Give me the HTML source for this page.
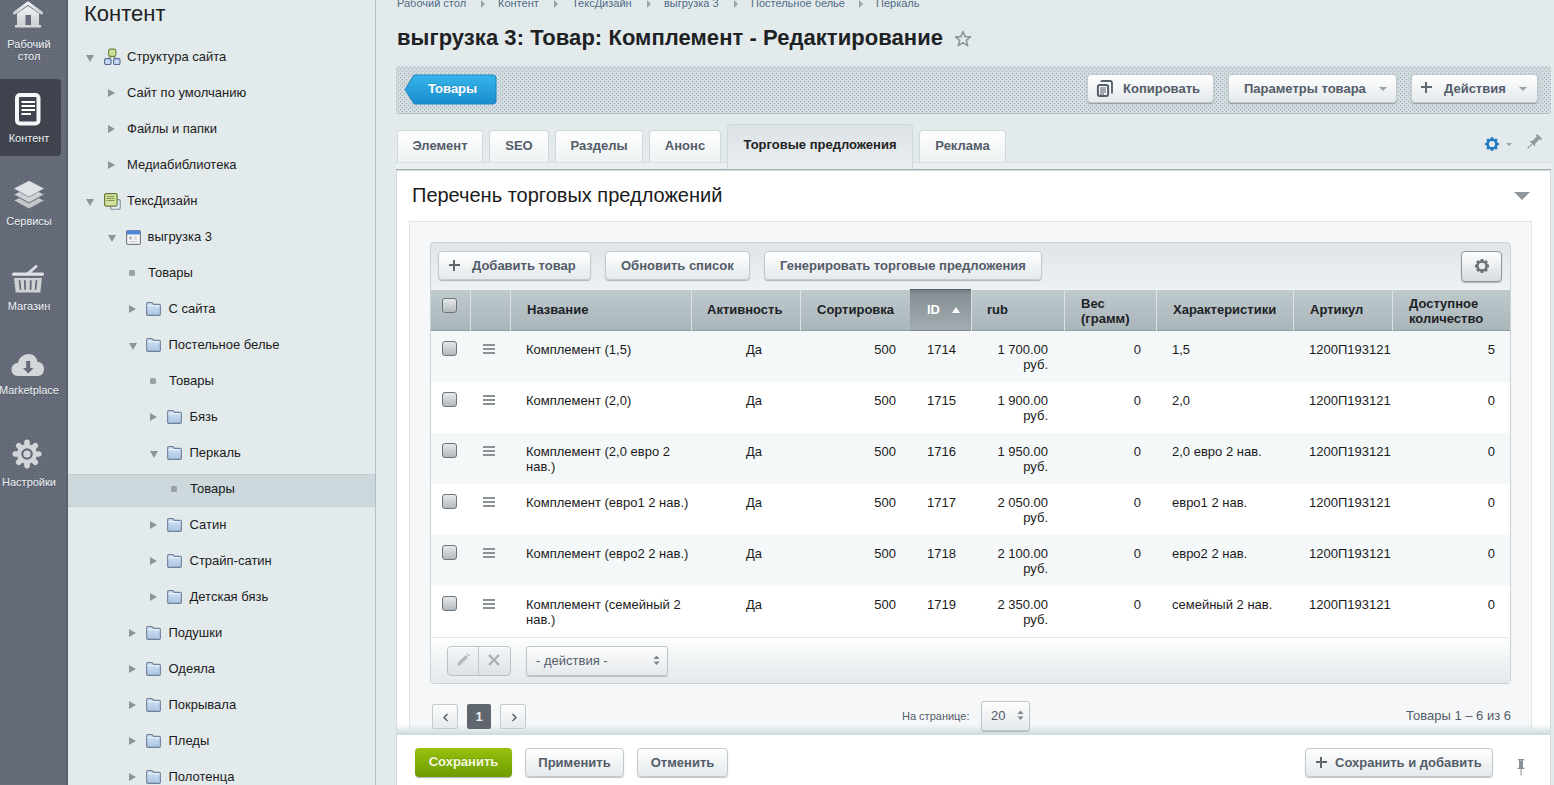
<!DOCTYPE html>
<html><head><meta charset="utf-8"><style>
*{box-sizing:border-box;margin:0;padding:0}
html,body{width:1554px;height:785px;overflow:hidden}
body{font-family:"Liberation Sans",sans-serif;background:#e3eaec;position:relative;color:#000}
.a{position:absolute}
#side{left:0;top:0;width:68px;height:785px;background-color:#656b79}
#side .sh{right:0;top:0;width:2px;height:785px;background:#5a606c}
#side .act{left:0;top:79px;width:61px;height:77px;background:#3e434d;border-radius:0 4px 4px 0}
#side .lbl{color:#eef2f4;font-size:11px;width:100px;text-align:center;line-height:12px;left:-21px;white-space:nowrap;text-shadow:0 1px 0 rgba(0,0,0,.25)}
#tree{left:68px;top:0;width:307px;height:785px;background:#e3eaec}
#treeb{left:375px;top:0;width:1px;height:785px;background:#afbdca}
.tt{font-size:13px;color:#1b1b1b;white-space:nowrap;line-height:16px}
.tri-r{width:0;height:0;border-left:7px solid #8e949b;border-top:4.5px solid transparent;border-bottom:4.5px solid transparent}
.tri-d{width:0;height:0;border-top:7px solid #8e949b;border-left:4.5px solid transparent;border-right:4.5px solid transparent}
.bul{width:6px;height:6px;background:#9aa1a7;border-radius:1.5px}
.sel{left:68px;top:474px;width:307px;height:33px;background:#ccd8dc;border-top:1px solid #c2cdd2;border-bottom:1px solid #c4cfd3}
.bc{font-size:11px;color:#4f6a85;white-space:nowrap;line-height:12px;top:-3px}
.bca{top:0px;width:0;height:0;border-left:4px solid #9aa3aa;border-top:4px solid transparent;border-bottom:4px solid transparent}
#title{left:397px;top:25px;font-size:22px;font-weight:bold;letter-spacing:0.055px;color:#1e2225;white-space:nowrap;line-height:26px}
#tb{left:396px;top:66px;width:1155px;height:47px;border-radius:3px;overflow:hidden;box-shadow:0 1px 0 #b3bcc1}
.btn{height:29px;border-radius:4px;background:linear-gradient(#ffffff,#e4e9eb);border:1px solid #c3cacd;
 box-shadow:0 1px 1px rgba(0,0,0,.25);font-size:13px;font-weight:bold;color:#535c69;white-space:nowrap;line-height:27px}
.tab{top:130px;height:32px;border:1px solid #d1d8db;border-bottom:none;border-radius:4px 4px 0 0;
 background:linear-gradient(#ffffff,#edf1f2);font-size:13px;font-weight:bold;color:#535c69;text-align:center;line-height:30px;white-space:nowrap}
.plus{width:11px;height:11px;background:linear-gradient(#5f676f,#5f676f) center/2.4px 11px no-repeat,linear-gradient(#5f676f,#5f676f) center/11px 2.4px no-repeat}
.hdr{background:linear-gradient(#bfcace,#a9b6ba);border-bottom:1px solid #8f9b9e}
.hsep{width:1px;height:41px;background:#e2e7e9;opacity:.85}
.cb{width:15px;height:15px;border:1px solid #6d7479;border-radius:3px;background:linear-gradient(#e6e9eb,#b3b9bd)}
.ht{font-size:13px;font-weight:bold;line-height:15px;white-space:nowrap}
.td{font-size:13px;line-height:15px;white-space:nowrap;color:#1b1b1b}
.r{text-align:right}
.drag{width:12px;height:10px;background:linear-gradient(#899396 0 2px,transparent 2px 4px,#899396 4px 6px,transparent 6px 8px,#899396 8px 10px)}
.sel2{border:1px solid #c0c7cb;border-radius:3px;background:linear-gradient(#fdfdfd,#e5e9eb);box-shadow:0 1px 1px rgba(0,0,0,.2)}
.updn{width:7px;height:11px;background:linear-gradient(135deg,transparent 50%,#7c858b 50%) 0 0/3.5px 4px no-repeat,linear-gradient(225deg,transparent 50%,#7c858b 50%) 3.5px 0/3.5px 4px no-repeat,linear-gradient(45deg,transparent 50%,#7c858b 50%) 0 7px/3.5px 4px no-repeat,linear-gradient(315deg,transparent 50%,#7c858b 50%) 3.5px 7px/3.5px 4px no-repeat}
.pg{width:26px;height:25px;border:1px solid #c3cacd;border-radius:2px;background:linear-gradient(#fdfdfd,#e5e9eb)}

</style></head><body>
<div id="side" class="a"><svg class="a" style="left:0;top:0" width="68" height="785"><defs><pattern id="sdp" width="4" height="3" patternUnits="userSpaceOnUse"><rect x="2" y="0" width="1" height="1" fill="#585e6c"/><rect x="0" y="2" width="1" height="1" fill="#585e6c"/></pattern></defs><rect width="68" height="785" fill="#676d7b"/><rect width="68" height="785" fill="url(#sdp)"/></svg><div class="a sh"></div><div class="a act"></div>
<svg class="a" style="left:12px;top:1px" width="32" height="28" viewBox="0 0 32 28">
<defs><linearGradient id="gw" x1="0" y1="0" x2="0" y2="1"><stop offset="0" stop-color="#f2f4f5"/><stop offset="1" stop-color="#c9cdd1"/></linearGradient></defs>
<path d="M2.5 12 L16 2 L29.5 12" fill="none" stroke="url(#gw)" stroke-width="3" stroke-linecap="round" stroke-linejoin="round"/>
<path d="M5 12.5 L16 5 L27 12.5 V25 H5 Z" fill="url(#gw)"/>
<rect x="3" y="24" width="26" height="2.5" fill="#d4d8db"/>
<rect x="13.5" y="14" width="5.5" height="10" fill="#656b79"/>
</svg>
<div class="a lbl" style="top:38px">Рабочий<br>стол</div>
<svg class="a" style="left:15px;top:93px" width="26" height="33" viewBox="0 0 26 33">
<rect x="2" y="2" width="21.5" height="28.5" rx="3" fill="#3e434d" stroke="#f4f6f7" stroke-width="4"/>
<rect x="6.5" y="8" width="13.5" height="2" fill="#fff"/><rect x="6.5" y="12" width="13.5" height="2" fill="#fff"/>
<rect x="6.5" y="16" width="13.5" height="2" fill="#fff"/><rect x="6.5" y="20" width="9.5" height="2" fill="#fff"/>
</svg>
<div class="a lbl" style="top:132px">Контент</div>
<svg class="a" style="left:12px;top:179px" width="34" height="32" viewBox="0 0 34 32">
<path d="M1.5 21.5 L17 13.5 L32.5 21.5 L17 30 Z" fill="#c3c7ca" stroke="#656b79" stroke-width="1"/>
<path d="M1.5 15.5 L17 7.5 L32.5 15.5 L17 24 Z" fill="#ccd0d3" stroke="#656b79" stroke-width="1"/>
<path d="M1.5 9.5 L17 1.5 L32.5 9.5 L17 18 Z" fill="#dfe3e5" stroke="#656b79" stroke-width="0.6"/>
</svg>
<div class="a lbl" style="top:215px">Сервисы</div>
<svg class="a" style="left:11px;top:264px" width="34" height="30" viewBox="0 0 34 30">
<path d="M16.5 10 L25 2.5" stroke="#d9dde0" stroke-width="3" stroke-linecap="round"/>
<rect x="1" y="8.5" width="32" height="3.3" rx="1.6" fill="#dde1e3"/>
<path d="M3 14 H31 L29.3 28.5 H4.7 Z" fill="#cdd1d4"/>
<path d="M8.6 17 L9.4 25" stroke="#656b79" stroke-width="1.8" stroke-linecap="round"/>
<path d="M13.8 17 L14.1 25" stroke="#656b79" stroke-width="1.8" stroke-linecap="round"/>
<path d="M19.8 17 L19.6 25" stroke="#656b79" stroke-width="1.8" stroke-linecap="round"/>
<path d="M25.4 17 L24.6 25" stroke="#656b79" stroke-width="1.8" stroke-linecap="round"/>
</svg>
<div class="a lbl" style="top:300px">Магазин</div>
<svg class="a" style="left:11px;top:353px" width="34" height="24" viewBox="0 0 34 24">
<path d="M7 23 C2.5 23 0.5 20 0.5 16.5 C0.5 12.5 3.5 10 7 10 C8 4.5 12.5 1 17.5 1 C22.5 1 26 4.5 26.5 9 C30 9 33 11.5 33 16 C33 20.5 30 23 26.5 23 Z" fill="#d3d7da"/>
<path d="M15.2 8 H19.2 V15 H22.5 L17.2 20.5 L11.9 15 H15.2 Z" fill="#656b79"/>
</svg>
<div class="a lbl" style="top:384px">Marketplace</div>
<svg class="a" style="left:12px;top:439px" width="30" height="30" viewBox="0 0 30 30">
<g fill="#d3d7da" transform="translate(15,15)">
<circle r="10"/>
<rect x="-2.8" y="-14.5" width="5.6" height="7" rx="2.8" transform="rotate(0)"/><rect x="-2.8" y="-14.5" width="5.6" height="7" rx="2.8" transform="rotate(45)"/><rect x="-2.8" y="-14.5" width="5.6" height="7" rx="2.8" transform="rotate(90)"/><rect x="-2.8" y="-14.5" width="5.6" height="7" rx="2.8" transform="rotate(135)"/><rect x="-2.8" y="-14.5" width="5.6" height="7" rx="2.8" transform="rotate(180)"/><rect x="-2.8" y="-14.5" width="5.6" height="7" rx="2.8" transform="rotate(225)"/><rect x="-2.8" y="-14.5" width="5.6" height="7" rx="2.8" transform="rotate(270)"/><rect x="-2.8" y="-14.5" width="5.6" height="7" rx="2.8" transform="rotate(315)"/>
<circle r="5.8" fill="#656b79"/><circle r="3.6" fill="#d3d7da"/>
</g></svg>
<div class="a lbl" style="top:476px">Настройки</div>
</div>
<div id="tree" class="a"></div><div class="a sel"></div><div id="treeb" class="a"></div>
<div class="a" style="left:84px;top:1px;font-size:22px;color:#1e2225;white-space:nowrap;line-height:26px">Контент</div>
<div class="a tri-d" style="left:86px;top:55px"></div>
<svg class="a" style="left:104px;top:48px" width="17" height="17" viewBox="0 0 17 17">
<path d="M8.2 8.5 L3.8 10.5 M8.2 8.5 L12.8 10.5" stroke="#7d8f9a" stroke-width="0.9"/>
<rect x="4.6" y="1.1" width="7.3" height="7.3" rx="1.6" fill="#cde09a" stroke="#72833f" stroke-width="1.1"/>
<rect x="0.6" y="10.6" width="6.4" height="6" rx="1.5" fill="#c4d9f5" stroke="#586b8e" stroke-width="1.1"/>
<rect x="9.6" y="10.6" width="6.4" height="6" rx="1.5" fill="#c4d9f5" stroke="#586b8e" stroke-width="1.1"/>
</svg>
<div class="a tt" style="left:127px;top:49px">Структура сайта</div>
<div class="a tri-r" style="left:108px;top:89px"></div>
<div class="a tt" style="left:127px;top:85px">Сайт по умолчанию</div>
<div class="a tri-r" style="left:108px;top:125px"></div>
<div class="a tt" style="left:127px;top:121px">Файлы и папки</div>
<div class="a tri-r" style="left:108px;top:161px"></div>
<div class="a tt" style="left:127px;top:157px">Медиабиблиотека</div>
<div class="a tri-d" style="left:86px;top:199px"></div>
<svg class="a" style="left:104px;top:193px" width="17" height="17" viewBox="0 0 17 17">
<rect x="6.6" y="6.6" width="9.6" height="9.6" rx="1.3" fill="#e4f2fa" stroke="#7f8c99" stroke-width="1.1"/>
<rect x="0.6" y="0.6" width="12.5" height="12.5" rx="1.5" fill="#d3e4a0" stroke="#6a7b3a" stroke-width="1.2"/>
<path d="M2.5 3.5 H10.5 M2.5 5.5 H10.5 M2.5 7.5 H10.5" stroke="#7b8f45" stroke-width="0.9"/>
</svg>
<div class="a tt" style="left:127px;top:193px">ТексДизайн</div>
<div class="a tri-d" style="left:108px;top:235px"></div>
<svg class="a" style="left:126px;top:230px" width="15" height="15" viewBox="0 0 15 15">
<rect x="0.6" y="0.6" width="13.8" height="13.8" rx="1.5" fill="#fafafa" stroke="#7c7f82" stroke-width="1.2"/>
<rect x="0.6" y="0.6" width="13.8" height="4" rx="1.3" fill="#4f86d8"/>
<rect x="3" y="6.5" width="3" height="3" fill="#b4b8bb"/><path d="M7.5 7 H11.5 M7.5 9 H11.5 M3 11.5 H11.5" stroke="#c2c5c8" stroke-width="1"/>
</svg>
<div class="a tt" style="left:147.5px;top:229px">выгрузка 3</div>
<div class="a bul" style="left:129px;top:270px"></div>
<div class="a tt" style="left:148px;top:265px">Товары</div>
<div class="a tri-r" style="left:129px;top:305px"></div>
<svg class="a" style="left:146px;top:302px" width="15" height="14" viewBox="0 0 16 15" preserveAspectRatio="none">
<defs><linearGradient id="fg146302" x1="0" y1="0" x2="0" y2="1"><stop offset="0" stop-color="#d6e6f6"/><stop offset="1" stop-color="#a9c3e2"/></linearGradient></defs>
<path d="M0.7 13 V2 Q0.7 0.7 2 0.7 H6.5 L8 2.5 H14 Q15.3 2.5 15.3 3.8 V13 Q15.3 14.3 14 14.3 H2 Q0.7 14.3 0.7 13 Z" fill="url(#fg146302)" stroke="#6d7f9a" stroke-width="1.2"/>
<path d="M1.5 4 H14.5" stroke="#eef6ff" stroke-width="1"/>
</svg>
<div class="a tt" style="left:168.5px;top:301px">С сайта</div>
<div class="a tri-d" style="left:129px;top:343px"></div>
<svg class="a" style="left:146px;top:338px" width="15" height="14" viewBox="0 0 16 15" preserveAspectRatio="none">
<defs><linearGradient id="fg146338" x1="0" y1="0" x2="0" y2="1"><stop offset="0" stop-color="#d6e6f6"/><stop offset="1" stop-color="#a9c3e2"/></linearGradient></defs>
<path d="M0.7 13 V2 Q0.7 0.7 2 0.7 H6.5 L8 2.5 H14 Q15.3 2.5 15.3 3.8 V13 Q15.3 14.3 14 14.3 H2 Q0.7 14.3 0.7 13 Z" fill="url(#fg146338)" stroke="#6d7f9a" stroke-width="1.2"/>
<path d="M1.5 4 H14.5" stroke="#eef6ff" stroke-width="1"/>
</svg>
<div class="a tt" style="left:168.5px;top:337px">Постельное белье</div>
<div class="a bul" style="left:150px;top:378px"></div>
<div class="a tt" style="left:169px;top:373px">Товары</div>
<div class="a tri-r" style="left:150px;top:413px"></div>
<svg class="a" style="left:167px;top:410px" width="15" height="14" viewBox="0 0 16 15" preserveAspectRatio="none">
<defs><linearGradient id="fg167410" x1="0" y1="0" x2="0" y2="1"><stop offset="0" stop-color="#d6e6f6"/><stop offset="1" stop-color="#a9c3e2"/></linearGradient></defs>
<path d="M0.7 13 V2 Q0.7 0.7 2 0.7 H6.5 L8 2.5 H14 Q15.3 2.5 15.3 3.8 V13 Q15.3 14.3 14 14.3 H2 Q0.7 14.3 0.7 13 Z" fill="url(#fg167410)" stroke="#6d7f9a" stroke-width="1.2"/>
<path d="M1.5 4 H14.5" stroke="#eef6ff" stroke-width="1"/>
</svg>
<div class="a tt" style="left:189.5px;top:409px">Бязь</div>
<div class="a tri-d" style="left:150px;top:451px"></div>
<svg class="a" style="left:167px;top:446px" width="15" height="14" viewBox="0 0 16 15" preserveAspectRatio="none">
<defs><linearGradient id="fg167446" x1="0" y1="0" x2="0" y2="1"><stop offset="0" stop-color="#d6e6f6"/><stop offset="1" stop-color="#a9c3e2"/></linearGradient></defs>
<path d="M0.7 13 V2 Q0.7 0.7 2 0.7 H6.5 L8 2.5 H14 Q15.3 2.5 15.3 3.8 V13 Q15.3 14.3 14 14.3 H2 Q0.7 14.3 0.7 13 Z" fill="url(#fg167446)" stroke="#6d7f9a" stroke-width="1.2"/>
<path d="M1.5 4 H14.5" stroke="#eef6ff" stroke-width="1"/>
</svg>
<div class="a tt" style="left:189.5px;top:445px">Перкаль</div>
<div class="a bul" style="left:171px;top:486px"></div>
<div class="a tt" style="left:190px;top:481px">Товары</div>
<div class="a tri-r" style="left:150px;top:521px"></div>
<svg class="a" style="left:167px;top:518px" width="15" height="14" viewBox="0 0 16 15" preserveAspectRatio="none">
<defs><linearGradient id="fg167518" x1="0" y1="0" x2="0" y2="1"><stop offset="0" stop-color="#d6e6f6"/><stop offset="1" stop-color="#a9c3e2"/></linearGradient></defs>
<path d="M0.7 13 V2 Q0.7 0.7 2 0.7 H6.5 L8 2.5 H14 Q15.3 2.5 15.3 3.8 V13 Q15.3 14.3 14 14.3 H2 Q0.7 14.3 0.7 13 Z" fill="url(#fg167518)" stroke="#6d7f9a" stroke-width="1.2"/>
<path d="M1.5 4 H14.5" stroke="#eef6ff" stroke-width="1"/>
</svg>
<div class="a tt" style="left:189.5px;top:517px">Сатин</div>
<div class="a tri-r" style="left:150px;top:557px"></div>
<svg class="a" style="left:167px;top:554px" width="15" height="14" viewBox="0 0 16 15" preserveAspectRatio="none">
<defs><linearGradient id="fg167554" x1="0" y1="0" x2="0" y2="1"><stop offset="0" stop-color="#d6e6f6"/><stop offset="1" stop-color="#a9c3e2"/></linearGradient></defs>
<path d="M0.7 13 V2 Q0.7 0.7 2 0.7 H6.5 L8 2.5 H14 Q15.3 2.5 15.3 3.8 V13 Q15.3 14.3 14 14.3 H2 Q0.7 14.3 0.7 13 Z" fill="url(#fg167554)" stroke="#6d7f9a" stroke-width="1.2"/>
<path d="M1.5 4 H14.5" stroke="#eef6ff" stroke-width="1"/>
</svg>
<div class="a tt" style="left:189.5px;top:553px">Страйп-сатин</div>
<div class="a tri-r" style="left:150px;top:593px"></div>
<svg class="a" style="left:167px;top:590px" width="15" height="14" viewBox="0 0 16 15" preserveAspectRatio="none">
<defs><linearGradient id="fg167590" x1="0" y1="0" x2="0" y2="1"><stop offset="0" stop-color="#d6e6f6"/><stop offset="1" stop-color="#a9c3e2"/></linearGradient></defs>
<path d="M0.7 13 V2 Q0.7 0.7 2 0.7 H6.5 L8 2.5 H14 Q15.3 2.5 15.3 3.8 V13 Q15.3 14.3 14 14.3 H2 Q0.7 14.3 0.7 13 Z" fill="url(#fg167590)" stroke="#6d7f9a" stroke-width="1.2"/>
<path d="M1.5 4 H14.5" stroke="#eef6ff" stroke-width="1"/>
</svg>
<div class="a tt" style="left:189.5px;top:589px">Детская бязь</div>
<div class="a tri-r" style="left:129px;top:629px"></div>
<svg class="a" style="left:146px;top:626px" width="15" height="14" viewBox="0 0 16 15" preserveAspectRatio="none">
<defs><linearGradient id="fg146626" x1="0" y1="0" x2="0" y2="1"><stop offset="0" stop-color="#d6e6f6"/><stop offset="1" stop-color="#a9c3e2"/></linearGradient></defs>
<path d="M0.7 13 V2 Q0.7 0.7 2 0.7 H6.5 L8 2.5 H14 Q15.3 2.5 15.3 3.8 V13 Q15.3 14.3 14 14.3 H2 Q0.7 14.3 0.7 13 Z" fill="url(#fg146626)" stroke="#6d7f9a" stroke-width="1.2"/>
<path d="M1.5 4 H14.5" stroke="#eef6ff" stroke-width="1"/>
</svg>
<div class="a tt" style="left:168.5px;top:625px">Подушки</div>
<div class="a tri-r" style="left:129px;top:665px"></div>
<svg class="a" style="left:146px;top:662px" width="15" height="14" viewBox="0 0 16 15" preserveAspectRatio="none">
<defs><linearGradient id="fg146662" x1="0" y1="0" x2="0" y2="1"><stop offset="0" stop-color="#d6e6f6"/><stop offset="1" stop-color="#a9c3e2"/></linearGradient></defs>
<path d="M0.7 13 V2 Q0.7 0.7 2 0.7 H6.5 L8 2.5 H14 Q15.3 2.5 15.3 3.8 V13 Q15.3 14.3 14 14.3 H2 Q0.7 14.3 0.7 13 Z" fill="url(#fg146662)" stroke="#6d7f9a" stroke-width="1.2"/>
<path d="M1.5 4 H14.5" stroke="#eef6ff" stroke-width="1"/>
</svg>
<div class="a tt" style="left:168.5px;top:661px">Одеяла</div>
<div class="a tri-r" style="left:129px;top:701px"></div>
<svg class="a" style="left:146px;top:698px" width="15" height="14" viewBox="0 0 16 15" preserveAspectRatio="none">
<defs><linearGradient id="fg146698" x1="0" y1="0" x2="0" y2="1"><stop offset="0" stop-color="#d6e6f6"/><stop offset="1" stop-color="#a9c3e2"/></linearGradient></defs>
<path d="M0.7 13 V2 Q0.7 0.7 2 0.7 H6.5 L8 2.5 H14 Q15.3 2.5 15.3 3.8 V13 Q15.3 14.3 14 14.3 H2 Q0.7 14.3 0.7 13 Z" fill="url(#fg146698)" stroke="#6d7f9a" stroke-width="1.2"/>
<path d="M1.5 4 H14.5" stroke="#eef6ff" stroke-width="1"/>
</svg>
<div class="a tt" style="left:168.5px;top:697px">Покрывала</div>
<div class="a tri-r" style="left:129px;top:737px"></div>
<svg class="a" style="left:146px;top:734px" width="15" height="14" viewBox="0 0 16 15" preserveAspectRatio="none">
<defs><linearGradient id="fg146734" x1="0" y1="0" x2="0" y2="1"><stop offset="0" stop-color="#d6e6f6"/><stop offset="1" stop-color="#a9c3e2"/></linearGradient></defs>
<path d="M0.7 13 V2 Q0.7 0.7 2 0.7 H6.5 L8 2.5 H14 Q15.3 2.5 15.3 3.8 V13 Q15.3 14.3 14 14.3 H2 Q0.7 14.3 0.7 13 Z" fill="url(#fg146734)" stroke="#6d7f9a" stroke-width="1.2"/>
<path d="M1.5 4 H14.5" stroke="#eef6ff" stroke-width="1"/>
</svg>
<div class="a tt" style="left:168.5px;top:733px">Пледы</div>
<div class="a tri-r" style="left:129px;top:773px"></div>
<svg class="a" style="left:146px;top:770px" width="15" height="14" viewBox="0 0 16 15" preserveAspectRatio="none">
<defs><linearGradient id="fg146770" x1="0" y1="0" x2="0" y2="1"><stop offset="0" stop-color="#d6e6f6"/><stop offset="1" stop-color="#a9c3e2"/></linearGradient></defs>
<path d="M0.7 13 V2 Q0.7 0.7 2 0.7 H6.5 L8 2.5 H14 Q15.3 2.5 15.3 3.8 V13 Q15.3 14.3 14 14.3 H2 Q0.7 14.3 0.7 13 Z" fill="url(#fg146770)" stroke="#6d7f9a" stroke-width="1.2"/>
<path d="M1.5 4 H14.5" stroke="#eef6ff" stroke-width="1"/>
</svg>
<div class="a tt" style="left:168.5px;top:769px">Полотенца</div>
<!-- breadcrumbs -->
<div class="a bc" style="left:397px">Рабочий стол</div><div class="a bca" style="left:481px"></div>
<div class="a bc" style="left:498px">Контент</div><div class="a bca" style="left:554px"></div>
<div class="a bc" style="left:572px">ТексДизайн</div><div class="a bca" style="left:647px"></div>
<div class="a bc" style="left:664px">выгрузка 3</div><div class="a bca" style="left:734px"></div>
<div class="a bc" style="left:751px">Постельное белье</div><div class="a bca" style="left:859px"></div>
<div class="a bc" style="left:876px">Перкаль</div>
<div id="title" class="a">выгрузка 3: Товар: Комплемент - Редактирование</div>
<svg class="a" style="left:954px;top:30px" width="18" height="18" viewBox="0 0 18 18"><path d="M9 1.5 L11.1 6.6 L16.5 6.9 L12.3 10.3 L13.7 15.6 L9 12.6 L4.3 15.6 L5.7 10.3 L1.5 6.9 L6.9 6.6 Z" fill="none" stroke="#8f979d" stroke-width="1.6" stroke-linejoin="round"/></svg>
<!-- toolbar -->
<div id="tb" class="a"><svg width="1155" height="47"><defs><pattern id="tdp" width="4" height="4" patternUnits="userSpaceOnUse"><rect x="2" y="1" width="1" height="1" fill="#a3aeb5"/><rect x="0" y="3" width="1" height="1" fill="#a3aeb5"/></pattern></defs><rect width="1155" height="47" fill="#d0dadf"/><rect width="1155" height="47" fill="url(#tdp)"/></svg></div>
<svg class="a" style="left:404px;top:74px" width="94" height="31" viewBox="0 0 94 31">
<defs><linearGradient id="bl" x1="0" y1="0" x2="0" y2="1"><stop offset="0" stop-color="#36b5ea"/><stop offset="1" stop-color="#1a8ccd"/></linearGradient></defs>
<path d="M10 1 H89 Q92 1 92 4 V27 Q92 30 89 30 H10 L1 15.5 Z" fill="url(#bl)" stroke="#1c86c2" stroke-width="1"/>
</svg>
<div class="a" style="left:428px;top:81px;font-size:13px;font-weight:bold;color:#fff;line-height:16px;text-shadow:0 -1px 0 rgba(0,0,0,.15)">Товары</div>
<div class="a btn" style="left:1087px;top:74px;width:127px"><span class="a" style="left:35px">Копировать</span></div>
<svg class="a" style="left:1096px;top:80px" width="18" height="18" viewBox="0 0 18 18"><path d="M5 2 Q5 1 6.5 1 H14 Q16 1 16 3 V13.5" fill="none" stroke="#535c69" stroke-width="1.8"/><rect x="1.9" y="4.9" width="10.2" height="11.2" rx="2" fill="#f4f6f7" stroke="#535c69" stroke-width="2"/><path d="M4 8 H10 M4 10 H10 M4 12 H10 M4 14 H8" stroke="#535c69" stroke-width="1.1"/></svg>
<div class="a btn" style="left:1228px;top:74px;width:169px"><span class="a" style="left:15px">Параметры товара</span></div>
<div class="a" style="left:1379px;top:87px;width:0;height:0;border-top:4px solid #9aa1a7;border-left:4px solid transparent;border-right:4px solid transparent"></div>
<div class="a btn" style="left:1411px;top:74px;width:127px"><span class="a" style="left:32px">Действия</span></div>
<div class="a" style="left:1421px;top:82px;width:11px;height:11px;background:linear-gradient(#5f676f,#5f676f) center/2.4px 11px no-repeat,linear-gradient(#5f676f,#5f676f) center/11px 2.4px no-repeat"></div>
<div class="a" style="left:1519px;top:87px;width:0;height:0;border-top:4px solid #9aa1a7;border-left:4px solid transparent;border-right:4px solid transparent"></div>
<!-- tabs -->
<div class="a tab" style="left:397px;width:86px">Элемент</div>
<div class="a tab" style="left:489px;width:60px">SEO</div>
<div class="a tab" style="left:555px;width:88px">Разделы</div>
<div class="a tab" style="left:649px;width:72px">Анонс</div>
<div class="a tab" style="z-index:2;left:727px;top:124px;height:45px;width:186px;background:linear-gradient(#dde3e6,#e9eef0);color:#222;line-height:40px">Торговые предложения</div>
<div class="a tab" style="left:919px;width:87px">Реклама</div>
<svg class="a" style="left:1484px;top:136px" width="16" height="16" viewBox="0 0 16 16"><g transform="translate(8,8)" fill="#1f7ac4"><circle r="5.6"/><circle cx="0" cy="-5.6" r="1.5" transform="rotate(0)"/><circle cx="0" cy="-5.6" r="1.5" transform="rotate(45)"/><circle cx="0" cy="-5.6" r="1.5" transform="rotate(90)"/><circle cx="0" cy="-5.6" r="1.5" transform="rotate(135)"/><circle cx="0" cy="-5.6" r="1.5" transform="rotate(180)"/><circle cx="0" cy="-5.6" r="1.5" transform="rotate(225)"/><circle cx="0" cy="-5.6" r="1.5" transform="rotate(270)"/><circle cx="0" cy="-5.6" r="1.5" transform="rotate(315)"/><circle r="3.1" fill="#e3eaec"/></g></svg>
<div class="a" style="left:1506px;top:143px;width:0;height:0;border-top:3px solid #9aa1a7;border-left:3px solid transparent;border-right:3px solid transparent"></div>
<svg class="a" style="left:1524px;top:132px" width="20" height="20" viewBox="0 0 20 20"><g transform="rotate(45 10 10) translate(6 2)" fill="#8f979d"><rect x="0.5" y="0" width="7" height="2" rx="0.8"/><path d="M2 2 H6 V8.5 L8 10.5 H0 L2 8.5 Z"/><rect x="3.5" y="10" width="1" height="7"/></g></svg>
<!-- strip below tabs -->
<div class="a" style="left:396px;top:162px;width:1155px;height:7px;background:#e9eef0;border-top:1px solid #d8dfe2"></div>
<div class="a" style="left:396px;top:169px;width:1155px;height:1px;background:#a1abb0"></div><div class="a" style="left:396px;top:170px;width:1155px;height:1px;background:#d3d9dc"></div>
<!-- content panel -->
<div class="a" style="left:396px;top:171px;width:1155px;height:614px;background:#fff;border-left:1px solid #d4dadd;border-right:1px solid #d4dadd"></div>
<div class="a" style="left:412px;top:183px;font-size:20px;color:#1b1b1b;white-space:nowrap;line-height:24px">Перечень торговых предложений</div>
<div class="a" style="left:1514px;top:192px;width:0;height:0;border-top:8px solid #8d969c;border-left:8px solid transparent;border-right:8px solid transparent"></div>
<div class="a" style="left:409px;top:221px;width:1123px;height:564px;background:#f5f7f8;border-top:1px solid #dfe5e8;border-left:1px solid #dfe5e8;border-right:1px solid #dfe5e8"></div>

<div class="a" style="left:430px;top:242px;width:1081px;height:442px;border:1px solid #c9d1d5;border-radius:4px;background:linear-gradient(#dfe5e8,#eef2f3 48px,#fff 48px)"></div>
<div class="a btn" style="left:438px;top:251px;width:153px"><span class="a" style="left:33px">Добавить товар</span></div>
<div class="a plus" style="left:449px;top:260px"></div>
<div class="a btn" style="left:605px;top:251px;width:145px"><span class="a" style="left:15px">Обновить список</span></div>
<div class="a btn" style="left:764px;top:251px;width:278px"><span class="a" style="left:15px">Генерировать торговые предложения</span></div>
<div class="a btn" style="left:1461px;top:251px;width:41px;height:31px;border-color:#8f989d;background:linear-gradient(#fdfdfd,#d7dcdf)"></div>
<svg class="a" style="left:1474px;top:258px" width="16" height="16" viewBox="0 0 16 16"><g transform="translate(8,8)" fill="#6b7378"><circle r="5.5"/><rect x="-1.7" y="-7" width="3.4" height="3.2" rx="1" transform="rotate(0)"/><rect x="-1.7" y="-7" width="3.4" height="3.2" rx="1" transform="rotate(45)"/><rect x="-1.7" y="-7" width="3.4" height="3.2" rx="1" transform="rotate(90)"/><rect x="-1.7" y="-7" width="3.4" height="3.2" rx="1" transform="rotate(135)"/><rect x="-1.7" y="-7" width="3.4" height="3.2" rx="1" transform="rotate(180)"/><rect x="-1.7" y="-7" width="3.4" height="3.2" rx="1" transform="rotate(225)"/><rect x="-1.7" y="-7" width="3.4" height="3.2" rx="1" transform="rotate(270)"/><rect x="-1.7" y="-7" width="3.4" height="3.2" rx="1" transform="rotate(315)"/><circle r="3.3" fill="#e9edef"/></g></svg>
<div class="a hdr" style="left:431px;top:290px;width:1079px;height:41px"></div>
<div class="a" style="left:910px;top:289px;width:61px;height:42px;border-top:1px solid #565e63;border-bottom:1px solid #7f898e;background:linear-gradient(#747e83,#858f94 4px,#a3acb1)"></div>
<div class="a hsep" style="left:470px;top:290px"></div>
<div class="a hsep" style="left:510px;top:290px"></div>
<div class="a hsep" style="left:691px;top:290px"></div>
<div class="a hsep" style="left:800px;top:290px"></div>
<div class="a hsep" style="left:971px;top:290px"></div>
<div class="a hsep" style="left:1064px;top:290px"></div>
<div class="a hsep" style="left:1156px;top:290px"></div>
<div class="a hsep" style="left:1293px;top:290px"></div>
<div class="a hsep" style="left:1392px;top:290px"></div>
<div class="a cb" style="left:442px;top:298px"></div>
<div class="a ht" style="left:527px;top:302px;color:#1e2225">Название</div>
<div class="a ht" style="left:707px;top:302px;color:#1e2225">Активность</div>
<div class="a ht" style="left:817px;top:302px;color:#1e2225">Сортировка</div>
<div class="a ht" style="left:927px;top:302px;color:#fff">ID</div>
<div class="a ht" style="left:987px;top:302px;color:#1e2225">rub</div>
<div class="a ht" style="left:1081px;top:296px;color:#1e2225">Вес<br>(грамм)</div>
<div class="a ht" style="left:1173px;top:302px;color:#1e2225">Характеристики</div>
<div class="a ht" style="left:1310px;top:302px;color:#1e2225">Артикул</div>
<div class="a ht" style="left:1409px;top:296px;color:#1e2225">Доступное<br>количество</div>
<div class="a" style="left:952px;top:307px;width:0;height:0;border-bottom:6px solid #fff;border-left:4.5px solid transparent;border-right:4.5px solid transparent"></div>
<div class="a" style="left:431px;top:331px;width:1079px;height:51px;background:#f5f8f9"></div>
<div class="a cb" style="left:442px;top:341px"></div>
<div class="a drag" style="left:483px;top:344px"></div>
<div class="a td" style="left:526px;top:342px">Комплемент (1,5)</div>
<div class="a td" style="left:746px;top:342px">Да</div>
<div class="a td r" style="left:796px;width:100px;top:342px">500</div>
<div class="a td" style="left:927px;top:342px">1714</div>
<div class="a td r" style="left:948px;width:100px;top:342px">1 700.00<br>руб.</div>
<div class="a td r" style="left:1041px;width:100px;top:342px">0</div>
<div class="a td" style="left:1172px;top:342px">1,5</div>
<div class="a td" style="left:1309px;top:342px">1200П193121</div>
<div class="a td r" style="left:1395px;width:100px;top:342px">5</div>
<div class="a" style="left:431px;top:382px;width:1079px;height:51px;background:#ffffff"></div>
<div class="a cb" style="left:442px;top:392px"></div>
<div class="a drag" style="left:483px;top:395px"></div>
<div class="a td" style="left:526px;top:393px">Комплемент (2,0)</div>
<div class="a td" style="left:746px;top:393px">Да</div>
<div class="a td r" style="left:796px;width:100px;top:393px">500</div>
<div class="a td" style="left:927px;top:393px">1715</div>
<div class="a td r" style="left:948px;width:100px;top:393px">1 900.00<br>руб.</div>
<div class="a td r" style="left:1041px;width:100px;top:393px">0</div>
<div class="a td" style="left:1172px;top:393px">2,0</div>
<div class="a td" style="left:1309px;top:393px">1200П193121</div>
<div class="a td r" style="left:1395px;width:100px;top:393px">0</div>
<div class="a" style="left:431px;top:433px;width:1079px;height:51px;background:#f5f8f9"></div>
<div class="a cb" style="left:442px;top:443px"></div>
<div class="a drag" style="left:483px;top:446px"></div>
<div class="a td" style="left:526px;top:444px">Комплемент (2,0 евро 2<br>нав.)</div>
<div class="a td" style="left:746px;top:444px">Да</div>
<div class="a td r" style="left:796px;width:100px;top:444px">500</div>
<div class="a td" style="left:927px;top:444px">1716</div>
<div class="a td r" style="left:948px;width:100px;top:444px">1 950.00<br>руб.</div>
<div class="a td r" style="left:1041px;width:100px;top:444px">0</div>
<div class="a td" style="left:1172px;top:444px">2,0 евро 2 нав.</div>
<div class="a td" style="left:1309px;top:444px">1200П193121</div>
<div class="a td r" style="left:1395px;width:100px;top:444px">0</div>
<div class="a" style="left:431px;top:484px;width:1079px;height:51px;background:#ffffff"></div>
<div class="a cb" style="left:442px;top:494px"></div>
<div class="a drag" style="left:483px;top:497px"></div>
<div class="a td" style="left:526px;top:495px">Комплемент (евро1 2 нав.)</div>
<div class="a td" style="left:746px;top:495px">Да</div>
<div class="a td r" style="left:796px;width:100px;top:495px">500</div>
<div class="a td" style="left:927px;top:495px">1717</div>
<div class="a td r" style="left:948px;width:100px;top:495px">2 050.00<br>руб.</div>
<div class="a td r" style="left:1041px;width:100px;top:495px">0</div>
<div class="a td" style="left:1172px;top:495px">евро1 2 нав.</div>
<div class="a td" style="left:1309px;top:495px">1200П193121</div>
<div class="a td r" style="left:1395px;width:100px;top:495px">0</div>
<div class="a" style="left:431px;top:535px;width:1079px;height:51px;background:#f5f8f9"></div>
<div class="a cb" style="left:442px;top:545px"></div>
<div class="a drag" style="left:483px;top:548px"></div>
<div class="a td" style="left:526px;top:546px">Комплемент (евро2 2 нав.)</div>
<div class="a td" style="left:746px;top:546px">Да</div>
<div class="a td r" style="left:796px;width:100px;top:546px">500</div>
<div class="a td" style="left:927px;top:546px">1718</div>
<div class="a td r" style="left:948px;width:100px;top:546px">2 100.00<br>руб.</div>
<div class="a td r" style="left:1041px;width:100px;top:546px">0</div>
<div class="a td" style="left:1172px;top:546px">евро2 2 нав.</div>
<div class="a td" style="left:1309px;top:546px">1200П193121</div>
<div class="a td r" style="left:1395px;width:100px;top:546px">0</div>
<div class="a" style="left:431px;top:586px;width:1079px;height:51px;background:#ffffff"></div>
<div class="a cb" style="left:442px;top:596px"></div>
<div class="a drag" style="left:483px;top:599px"></div>
<div class="a td" style="left:526px;top:597px">Комплемент (семейный 2<br>нав.)</div>
<div class="a td" style="left:746px;top:597px">Да</div>
<div class="a td r" style="left:796px;width:100px;top:597px">500</div>
<div class="a td" style="left:927px;top:597px">1719</div>
<div class="a td r" style="left:948px;width:100px;top:597px">2 350.00<br>руб.</div>
<div class="a td r" style="left:1041px;width:100px;top:597px">0</div>
<div class="a td" style="left:1172px;top:597px">семейный 2 нав.</div>
<div class="a td" style="left:1309px;top:597px">1200П193121</div>
<div class="a td r" style="left:1395px;width:100px;top:597px">0</div>
<div class="a" style="left:431px;top:637px;width:1079px;height:46px;border-top:1px solid #e3e8ea;border-radius:0 0 3px 3px;background:linear-gradient(#fdfefe,#e4e9eb)"></div>
<div class="a" style="left:447px;top:646px;width:64px;height:30px;border:1px solid #b9c1c5;border-radius:4px;background:linear-gradient(#f4f6f7,#dde2e5);box-shadow:inset 0 1px 0 #fff"></div>
<div class="a" style="left:478px;top:647px;width:1px;height:28px;background:#bfc6ca"></div>
<svg class="a" style="left:455px;top:652px" width="16" height="16" viewBox="0 0 16 16"><path d="M2 14 L3 10.5 L10.5 3 L13 5.5 L5.5 13 Z M11.5 2 L12.5 1 L15 3.5 L14 4.5 Z" fill="#b4bbbf"/></svg>
<svg class="a" style="left:487px;top:653px" width="14" height="14" viewBox="0 0 14 14"><path d="M2 2 L12 12 M12 2 L2 12" stroke="#aab1b5" stroke-width="2.4"/></svg>
<div class="a sel2" style="left:526px;top:646px;width:142px;height:30px"><span class="a" style="left:9px;top:6px;font-size:13px;color:#535c69;white-space:nowrap">- действия -</span></div>
<svg class="a" style="left:653px;top:655px" width="7" height="11" viewBox="0 0 7 11"><path d="M3.5 0.5 L6.5 4 H0.5 Z M0.5 6.5 H6.5 L3.5 10 Z" fill="#7c858b"/></svg>
<div class="a" style="left:397px;top:724px;width:1153px;height:11px;background:linear-gradient(rgba(245,247,248,0),#dde6e8 65%,#ccd9dc)"></div>
<div class="a pg" style="left:432px;top:704px"><svg class="a" style="left:9px;top:8px" width="8" height="9" viewBox="0 0 8 9"><path d="M5.5 1 L2 4.5 L5.5 8" fill="none" stroke="#535c69" stroke-width="1.4"/></svg></div>
<div class="a" style="left:467px;top:704px;width:24px;height:25px;background:#5f666e;border-radius:2px;color:#eef0f2;font-size:13px;font-weight:bold;text-align:center;line-height:25px">1</div>
<div class="a pg" style="left:500px;top:704px"><svg class="a" style="left:9px;top:8px" width="8" height="9" viewBox="0 0 8 9"><path d="M2.5 1 L6 4.5 L2.5 8" fill="none" stroke="#535c69" stroke-width="1.4"/></svg></div>
<div class="a" style="left:902px;top:710px;font-size:11px;color:#535c69;white-space:nowrap;line-height:13px">На странице:</div>
<div class="a sel2" style="left:981px;top:701px;width:49px;height:30px"><span class="a" style="left:9px;top:6px;font-size:13px;line-height:15px;color:#535c69">20</span></div>
<svg class="a" style="left:1017px;top:710px" width="7" height="11" viewBox="0 0 7 11"><path d="M3.5 0.5 L6.5 4 H0.5 Z M0.5 6.5 H6.5 L3.5 10 Z" fill="#7c858b"/></svg>
<div class="a" style="left:1311px;width:200px;text-align:right;top:708px;font-size:13px;color:#535c69;white-space:nowrap;line-height:15px">Товары 1 – 6 из 6</div>
<div class="a" style="left:396px;top:735px;width:1155px;height:50px;background:#fff;border-left:1px solid #d4dadd;border-right:1px solid #d4dadd"></div>
<div class="a" style="left:415px;top:748px;width:97px;height:29px;border-radius:4px;background:linear-gradient(#98c20e,#6e9b00);box-shadow:0 1px 1px rgba(0,0,0,.3);color:#f4f9dc;font-size:13px;font-weight:bold;text-align:center;line-height:28px;text-shadow:0 -1px 0 rgba(0,0,0,.15)">Сохранить</div>
<div class="a btn" style="left:525px;top:748px;width:99px;text-align:center">Применить</div>
<div class="a btn" style="left:637px;top:748px;width:91px;text-align:center">Отменить</div>
<div class="a btn" style="left:1305px;top:748px;width:188px"><span class="a" style="left:29px">Сохранить и добавить</span></div>
<div class="a plus" style="left:1316px;top:757px"></div>
<svg class="a" style="left:1517px;top:759px" width="8" height="17" viewBox="0 0 8 17"><g fill="#8a9196"><rect x="0.8" y="0" width="6.4" height="1.6" rx="0.5"/><path d="M2 1.5 H6 V8.3 L8 10 H0 L2 8.3 Z"/><rect x="3.6" y="10" width="1" height="6.5"/></g></svg>
</body></html>
